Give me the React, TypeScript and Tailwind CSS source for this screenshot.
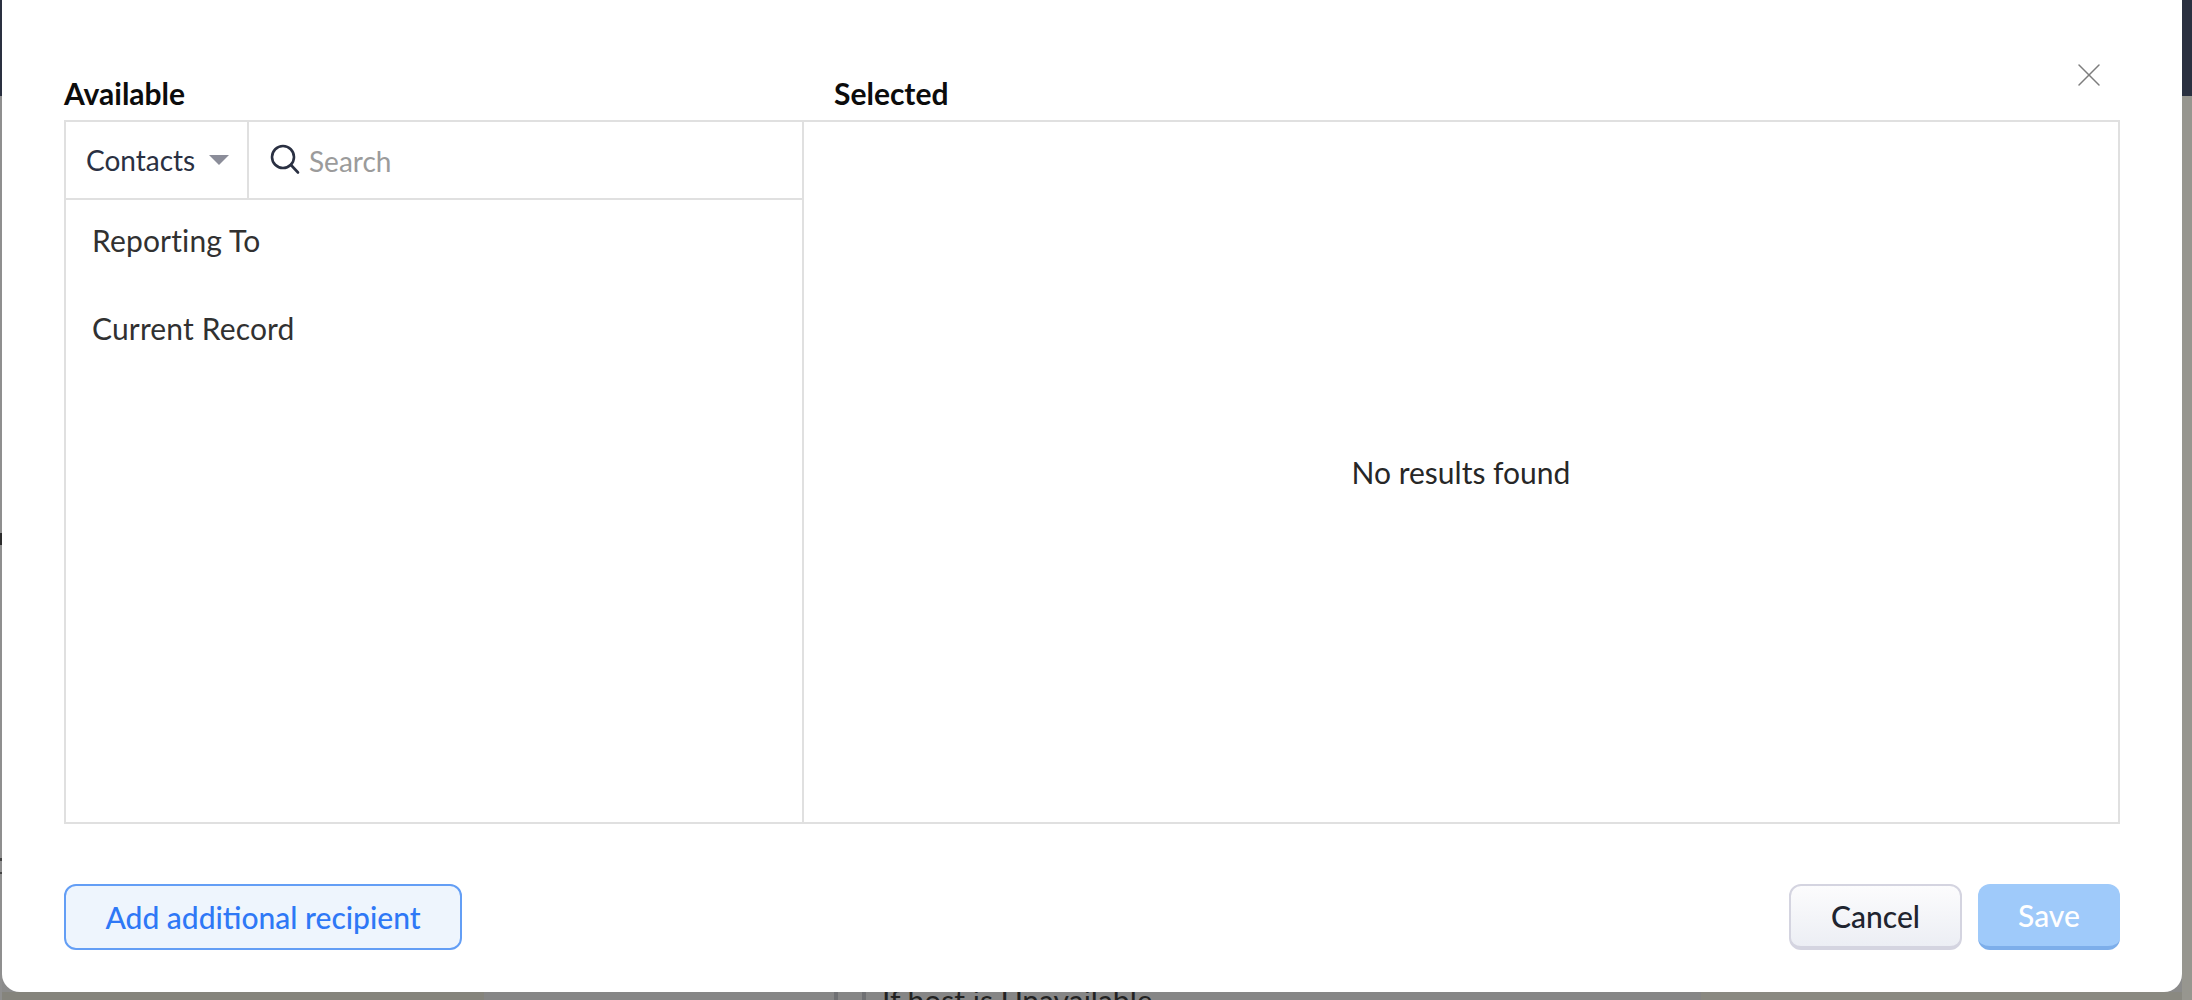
import { X } from 'lucide-react'

function SearchIcon() {
  return (
    <svg width="32" height="32" viewBox="0 0 32 32" fill="none" stroke="#2a3042" strokeWidth="2.6" strokeLinecap="round" aria-hidden="true">
      <circle cx="14" cy="13" r="11" />
      <line x1="22" y1="21" x2="29" y2="28.5" />
    </svg>
  )
}

function Caret() {
  return <span className="ml-[14px] h-0 w-0 border-x-[10px] border-t-[10px] border-x-transparent border-t-[#8b8d99]" />
}

function AvailablePanel() {
  return (
    <div className="flex w-[738px] flex-col border-r-2 border-[#e0e0e0]">
      <div className="flex h-[78px] border-b-2 border-[#e0e0e0] text-[28px]">
        <div className="flex w-[183px] items-center border-r-2 border-[#e0e0e0] pl-[20px] text-[#2a3042]">
          <span>Contacts</span>
          <Caret />
        </div>
        <div className="flex flex-1 items-center gap-[8px] pl-[20px]">
          <SearchIcon />
          <span className="mt-[2px] text-[#9b9b9b]">Search</span>
        </div>
      </div>
      <div className="flex flex-col gap-[24px] pl-[26px] pt-[8px] tracking-[0.15px] text-[#313131]">
        <div className="flex h-[64px] items-center">Reporting To</div>
        <div className="flex h-[64px] items-center">Current Record</div>
      </div>
    </div>
  )
}

function Dialog() {
  return (
    <div className="relative flex h-[992px] flex-col rounded-b-[18px] bg-white pl-[62px] pr-[62px] text-[30px]">
      <button type="button" aria-label="Close" className="absolute right-[73px] top-[55px] text-[#7d7d7d]">
        <X size={40} strokeWidth={0.9} />
      </button>
      <div className="flex h-[120px] items-end pb-[4px] font-bold text-[#0c0c0c]">
        <div className="w-[770px]">Available</div>
        <div>Selected</div>
      </div>
      <div className="flex h-[704px] border-2 border-[#e0e0e0]">
        <AvailablePanel />
        <div className="flex flex-1 items-center justify-center text-[#272727]">No results found</div>
      </div>
      <div className="mt-[60px] flex items-start justify-between">
        <button type="button" className="h-[66px] w-[398px] rounded-[12px] border-2 border-[#639ef5] bg-[#eef5fd] font-medium text-[#2e78f6]">
          Add additional recipient
        </button>
        <div className="flex gap-4">
          <button type="button" className="h-[66px] w-[173px] rounded-[12px] border-2 border-b-4 border-[#d4d4e0] bg-gradient-to-b from-[#fcfcfd] to-[#eceef4] font-medium text-[#20242f]">
            Cancel
          </button>
          <button type="button" className="h-[66px] w-[142px] rounded-[12px] border-b-4 border-[#7daeea] bg-[#9fcafa] font-medium text-white">
            Save
          </button>
        </div>
      </div>
    </div>
  )
}

// what shows of the page behind the dialog, along its bottom edge
function BackdropStrip() {
  return (
    <div className="flex h-[8px] overflow-hidden">
      <div className="w-[482px] bg-[#85847c]" />
      <div className="flex w-[1217px] bg-[#868686]">
        <div className="ml-[350px] w-[4px] bg-[#6f7073]" />
        <div className="ml-[24px] w-[4px] bg-[#6f7073]" />
        <div className="ml-[16px] pt-[4px] text-[30px] leading-[8px] text-[#222]">
          <div className="whitespace-nowrap">If host is Unavailable</div>
        </div>
      </div>
      <div className="flex-1 bg-[#8a8981]" />
    </div>
  )
}

function LeftEdge() {
  return (
    <div className="flex w-[2px] flex-col bg-[#8f8f8f]">
      <div className="h-[96px] bg-[#2a3040]" />
      <div className="mt-[437px] h-[12px] bg-[#2c2c2c]" />
      <div className="mt-[313px] h-[3px] bg-[#444]" />
      <div className="mt-[11px] h-[2px] bg-[#444]" />
    </div>
  )
}

export default function App() {
  return (
    <div className="flex h-[1000px] w-[2192px] overflow-hidden bg-[#8b8b8b] font-['Lato',sans-serif]">
      <LeftEdge />
      <div className="flex w-[2180px] flex-col">
        <Dialog />
        <BackdropStrip />
      </div>
      <div className="w-[10px] bg-[#97968f]">
        <div className="h-[96px] bg-[#2a3040]" />
      </div>
    </div>
  )
}
